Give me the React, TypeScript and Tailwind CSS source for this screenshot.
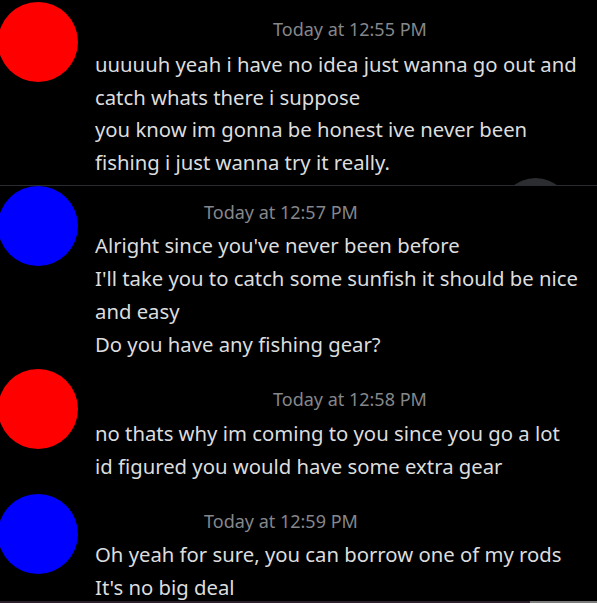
import React from "react";

interface Message {
  color: string;
  time: string;
  timeIndent: string;
  rowClass: string;
  timeTop: string;
  gap: string;
  lines: string[];
}

const messages: Message[] = [
  {
    color: "bg-[#ff0000]",
    time: "Today at 12:55 PM",
    timeIndent: "ml-[178px]",
    rowClass: "h-[186px] border-b border-[#2a2b30] relative overflow-hidden",
    timeTop: "pt-[18px]",
    gap: "mt-[8px] leading-[32.5px]",
    lines: [
      "uuuuuh yeah i have no idea just wanna go out and",
      "catch whats there i suppose",
      "you know im gonna be honest ive never been",
      "fishing i just wanna try it really.",
    ],
  },
  {
    color: "bg-[#0000ff]",
    time: "Today at 12:57 PM",
    timeIndent: "ml-[109px]",
    rowClass: "h-[183px]",
    timeTop: "pt-[15px]",
    gap: "mt-[6px] leading-[33px]",
    lines: [
      "Alright since you've never been before",
      "I'll take you to catch some sunfish it should be nice",
      "and easy",
      "Do you have any fishing gear?",
    ],
  },
  {
    color: "bg-[#ff0000]",
    time: "Today at 12:58 PM",
    timeIndent: "ml-[178px]",
    rowClass: "h-[125px]",
    timeTop: "pt-[19px]",
    gap: "mt-[7px] leading-[32.5px]",
    lines: [
      "no thats why im coming to you since you go a lot",
      "id figured you would have some extra gear",
    ],
  },
  {
    color: "bg-[#0000ff]",
    time: "Today at 12:59 PM",
    timeIndent: "ml-[109px]",
    rowClass: "h-[107px]",
    timeTop: "pt-[16px]",
    gap: "mt-[6px] leading-[33px]",
    lines: ["Oh yeah for sure, you can borrow one of my rods", "It's no big deal"],
  },
];

export default function App() {
  return (
    <div
      className="w-[597px] h-[603px] bg-black overflow-hidden flex flex-col"
      style={{ fontFamily: '"Noto Sans", "Open Sans", sans-serif' }}
    >
      {messages.map((m, i) => (
        <div key={i} className={`flex shrink-0 ${m.rowClass}`}>
          <div className={`w-[80px] h-[80px] rounded-full shrink-0 -ml-[2px] ${i === 0 ? "mt-[2px]" : ""} ${m.color}`} />
          <div className={`flex flex-col pl-[17px] ${m.timeTop}`}>
            <div className={`text-[18px] leading-[22px] text-[#85878b] whitespace-nowrap ${m.timeIndent}`}>{m.time}</div>
            <div className={`text-[20.3px] text-[#dcddde] whitespace-nowrap ${m.gap}`}>
              {m.lines.map((l, j) => (
                <div key={j}>{l}</div>
              ))}
            </div>
          </div>
          {/* scroll button peeking above the divider */}
          {i === 0 && (
            <div className="absolute left-[500px] top-[178px] w-[71px] h-[71px] rounded-full bg-[#2b2d31]" />
          )}
        </div>
      ))}
      <div className="flex h-[2px] mt-auto">
        <div className="flex-1 bg-[#2a1f2b]" />
        <div className="w-[67px] bg-[#7b7b7b]" />
      </div>
    </div>
  );
}
